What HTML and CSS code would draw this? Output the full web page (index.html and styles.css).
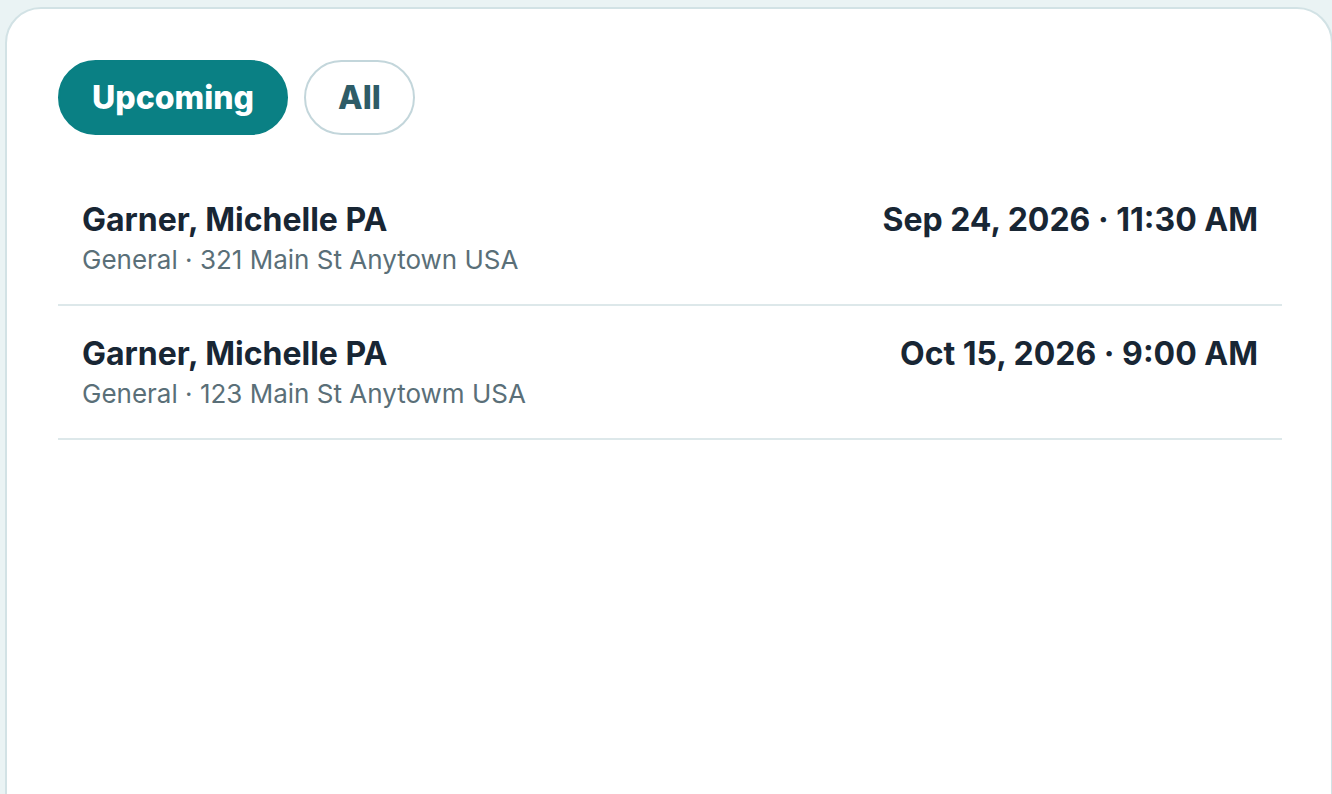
FILE: index.html
```html
<!DOCTYPE html>
<html lang="en">
<head>
<meta charset="utf-8">
<title>Appointments</title>
<link rel="stylesheet" href="styles.css">
</head>
<body>
<main class="card">
  <div class="tabs">
    <button class="tab tab-active" type="button">Upcoming</button>
    <button class="tab" type="button">All</button>
  </div>
  <ul class="list">
    <li class="row">
      <div class="info">
        <div class="name">Garner, Michelle PA</div>
        <div class="meta">General · 321 Main St Anytown USA</div>
      </div>
      <div class="when">Sep 24, 2026 · 11:30 AM</div>
    </li>
    <li class="row">
      <div class="info">
        <div class="name">Garner, Michelle PA</div>
        <div class="meta">General · 123 Main St Anytowm USA</div>
      </div>
      <div class="when">Oct 15, 2026 · 9:00 AM</div>
    </li>
  </ul>
</main>
</body>
</html>
```

FILE: styles.css
```css
html, body {
  margin: 0;
  padding: 0;
  height: 100%;
  overflow: hidden;
}
body {
  background: #eaf3f4;
  font-family: Inter, "Noto Sans", sans-serif;
  padding: 7px 0 0 5px;
  box-sizing: border-box;
}
.card {
  width: 1328px;
  height: 900px;
  box-sizing: border-box;
  background: #ffffff;
  border: 2px solid #d2e2e5;
  border-radius: 36px;
  padding: 51px 49px 0 51px;
}
.tabs {
  display: flex;
  gap: 16px;
}
.tab {
  height: 75px;
  border-radius: 38px;
  font-family: inherit;
  font-size: 32px;
  font-weight: 800;
  padding: 0 32px;
  background: #ffffff;
  border: 2px solid #c3d6db;
  color: #2e5c67;
  cursor: pointer;
}
.tab-active {
  background: #0a8084;
  border-color: #0a8084;
  color: #ffffff;
}
.list {
  list-style: none;
  margin: 37px 0 0 0;
  padding: 0;
  width: 1224px;
}
.row {
  display: flex;
  justify-content: space-between;
  align-items: flex-start;
  padding: 29px 24px 28px 24px;
  border-bottom: 2px solid #dde8ea;
}
.name {
  font-size: 32px;
  font-weight: 700;
  color: #182634;
  line-height: 38px;
}
.meta {
  margin-top: 5px;
  font-size: 26px;
  color: #5a6f78;
  line-height: 32px;
}
.when {
  font-size: 32px;
  font-weight: 700;
  color: #182634;
  line-height: 38px;
}
```
